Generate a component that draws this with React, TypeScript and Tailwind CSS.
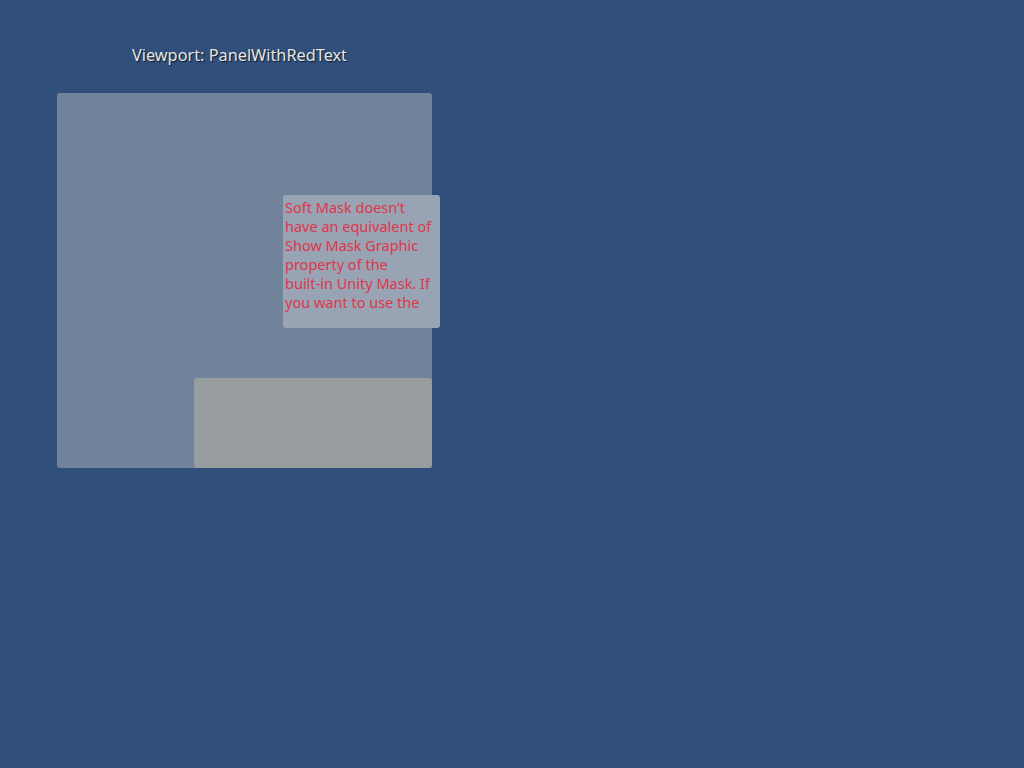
export default function App() {
  return (
    <div className="relative w-[1024px] h-[768px] overflow-hidden bg-[#304f7a] font-['Noto_Sans',sans-serif]">
      {/* Title */}
      <div className="absolute left-[132px] top-[44px] text-[16.3px] leading-[22px] text-[#e6e6e6] [text-shadow:1px_1px_1px_rgba(0,0,0,0.7)]">
        Viewport: PanelWithRedText
      </div>

      {/* Panel */}
      <div className="absolute left-[57px] top-[93px] w-[375px] h-[375px] rounded-[3px] bg-[#71829b]" />

      {/* Gray image */}
      <div className="absolute left-[194px] top-[378px] w-[238px] h-[90px] rounded-[3px] bg-[#979c9f]" />

      {/* Text box */}
      <div className="absolute left-[283px] top-[195px] w-[157px] h-[133px] rounded-[3px] bg-[#98a3b3] pl-[2px] pr-[3px] pt-[3px]">
        <p className="text-[14.5px] leading-[19px] text-[#e0354a]">
          Soft Mask doesn’t have an equivalent of Show Mask Graphic property of the{" "}
          <span className="whitespace-nowrap">built-in</span> Unity Mask. If you want to use the
        </p>
      </div>
    </div>
  );
}
